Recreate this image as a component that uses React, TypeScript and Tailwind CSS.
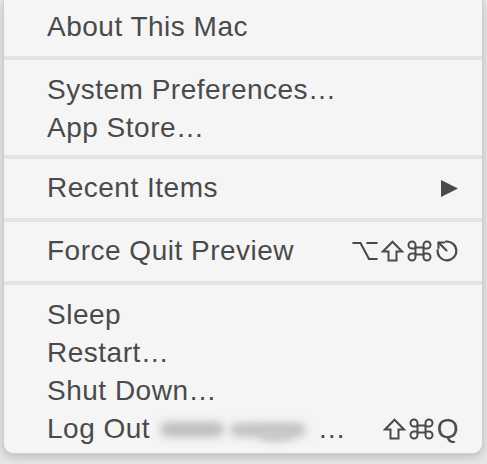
import React from "react";

const font = { fontFamily: '"Liberation Sans", Arial, sans-serif' };

function Row({ label, right }: { label: React.ReactNode; right?: React.ReactNode }) {
  return (
    <div className="flex h-[38px] items-center justify-between pl-[43px] pr-[23px]">
      <span className="whitespace-nowrap">{label}</span>
      {right}
    </div>
  );
}

function Sep() {
  return <div className="h-[4px] bg-[#e4e4e4]" />;
}

const C = "#4a4a4a";

function OptGlyph() {
  return (
    <svg width="26" height="22" viewBox="0 0 26 22" fill="none" stroke={C} strokeWidth="2.1" strokeLinecap="square">
      <path d="M1.5 3 H8.5 L17 19 H24.5" />
      <path d="M15.5 3 H24.5" />
    </svg>
  );
}

function ShiftGlyph() {
  return (
    <svg width="23" height="22" viewBox="0 0 23 22" fill="none" stroke={C} strokeWidth="2" strokeLinejoin="miter">
      <path d="M11.5 1.8 L21 11.5 H15.5 V20.5 H7.5 V11.5 H2 Z" />
    </svg>
  );
}

function CmdGlyph() {
  return (
    <svg width="25" height="22" viewBox="0 0 25 22" fill="none" stroke={C} strokeWidth="2">
      <path d="M8.5 7.5 H16.5 V14.5 H8.5 Z" />
      <path d="M8.5 7.5 V5 A3.5 3.5 0 1 0 5 8.5 H8.5" />
      <path d="M16.5 7.5 V5 A3.5 3.5 0 1 1 20 8.5 H16.5" />
      <path d="M8.5 14.5 V17 A3.5 3.5 0 1 1 5 13.5 H8.5" />
      <path d="M16.5 14.5 V17 A3.5 3.5 0 1 0 20 13.5 H16.5" />
    </svg>
  );
}

function EscGlyph() {
  return (
    <svg width="24" height="24" viewBox="0 0 24 24" fill="none" stroke={C} strokeWidth="2.1" strokeLinecap="round" strokeLinejoin="round">
      <path d="M11 2.6 A9.4 9.4 0 1 1 2.6 11" />
      <path d="M3.5 3.5 L11.5 11.5" />
      <path d="M3.5 3.5 L3.5 9 M3.5 3.5 L9 3.5" />
    </svg>
  );
}

function Blur() {
  return (
    <span className="relative inline-block h-[30px] w-[151px] align-middle">
      <span className="absolute left-[2px] top-[8px] h-[15px] w-[64px] rounded-full bg-[#bdbdbd] blur-[4px]" />
      <span className="absolute left-[72px] top-[9px] h-[14px] w-[76px] rounded-full bg-[#c2c2c2] blur-[4px]" />
      <span className="absolute left-[102px] top-[16px] h-[11px] w-[32px] rounded-full bg-[#c8c8c8] blur-[4px]" />
    </span>
  );
}

export default function App() {
  return (
    <div className="h-[464px] w-[487px] overflow-hidden bg-[#e6e6e6]" style={font}>
      <div className="ml-[3px] mr-[4px] h-[454px] overflow-hidden rounded-b-[10px] border-x border-b border-[#cfcfcf] bg-[#f5f5f5] text-[28px] tracking-[0.5px] text-[#4a4a4a] shadow-[0_3px_8px_rgba(0,0,0,0.18)]">
        <div className="pt-[8px] pb-[10px]">
          <Row label="About This Mac" />
        </div>
        <Sep />
        <div className="pt-[11px] pb-[8px]">
          <Row label="System Preferences…" />
          <Row label="App Store…" />
        </div>
        <Sep />
        <div className="pt-[10px] pb-[11px]">
          <Row
            label="Recent Items"
            right={
              <svg width="17" height="17" viewBox="0 0 17 17" className="mr-[1px]">
                <path d="M0 0 L17 8.5 L0 17 Z" fill={C} />
              </svg>
            }
          />
        </div>
        <Sep />
        <div className="pt-[10px] pb-[11px]">
          <Row
            label="Force Quit Preview"
            right={
              <span className="flex items-center gap-[3px]">
                <OptGlyph />
                <ShiftGlyph />
                <CmdGlyph />
                <EscGlyph />
              </span>
            }
          />
        </div>
        <Sep />
        <div className="pt-[11px]">
          <Row label="Sleep" />
          <Row label="Restart…" />
          <Row label="Shut Down…" />
          <Row
            label={
              <span className="flex items-center">
                <span>Log Out&nbsp;</span>
                <Blur />
                <span>&nbsp;…</span>
              </span>
            }
            right={
              <span className="flex items-center gap-[3px]">
                <ShiftGlyph />
                <CmdGlyph />
                <span className="leading-none">Q</span>
              </span>
            }
          />
        </div>
      </div>
    </div>
  );
}
